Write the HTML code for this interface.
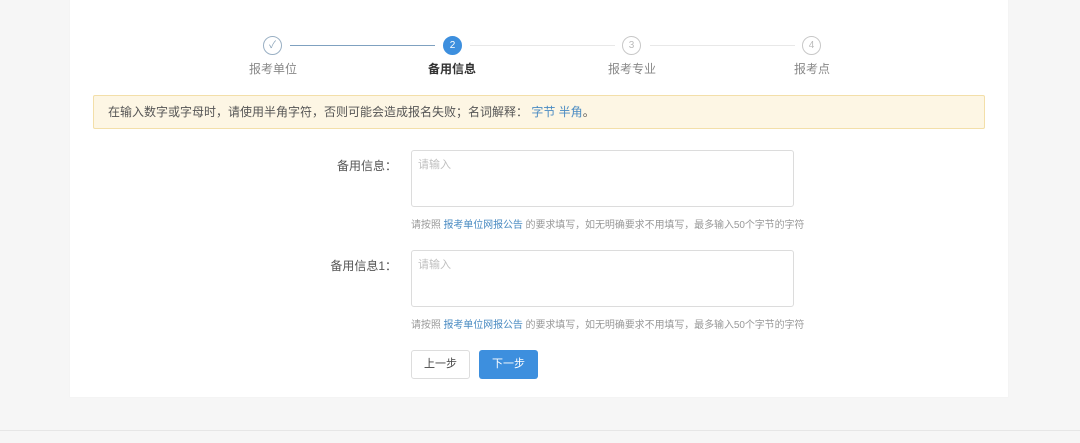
<!DOCTYPE html>
<html><head><meta charset="utf-8"><style>
body{margin:0;width:1080px;height:443px;background:#f6f6f6;font-family:"Liberation Sans","Noto Sans CJK SC",sans-serif;position:relative;overflow:hidden}
.card{position:absolute;left:70px;top:0;width:938px;height:397px;background:#fff;box-shadow:0 0 2px #eee}
.bline{position:absolute;left:0;top:430px;width:1080px;height:1px;background:#e6e6e6}
.a{position:absolute}
.c{position:absolute;width:19px;height:19px;border-radius:50%;border:1px solid #c8c8c8;box-sizing:border-box;text-align:center;font-size:10px;line-height:17px;color:#bbb;background:#fff}
.lbl{position:absolute;font-size:12px;color:#888;transform:translateX(-50%);top:60px;white-space:nowrap}
.ln{position:absolute;top:45px;height:1px}
.ta{position:absolute;left:411px;width:383px;height:57px;border:1px solid #dcdcdc;border-radius:3px;box-sizing:border-box;font-size:11px;color:#c0c0c0;padding:5px 6px}
.fl{position:absolute;font-size:12px;color:#555;right:683px;white-space:nowrap}
.hint{position:absolute;left:411px;font-size:10px;color:#999;white-space:nowrap;letter-spacing:-0.08px}
.hint span{color:#4a8bc2}
.btn{position:absolute;top:350px;height:29px;border-radius:3px;box-sizing:border-box;font-size:11px;text-align:center;line-height:27px}
</style></head><body>
<div class="card"></div>
<div class="bline"></div>
<div class="ln" style="left:290px;width:145px;background:#7fa1c0"></div>
<div class="ln" style="left:470px;width:145px;background:#e8e8e8"></div>
<div class="ln" style="left:650px;width:145px;background:#e8e8e8"></div>
<div class="c" style="left:263px;top:36px;border-color:#9ab0c4;color:#8aa3b8">✓</div>
<div class="c" style="left:443px;top:36px;background:#3d8fde;border-color:#3d8fde;color:#fff">2</div>
<div class="c" style="left:622px;top:36px">3</div>
<div class="c" style="left:802px;top:36px">4</div>
<div class="lbl" style="left:273px">报考单位</div>
<div class="lbl" style="left:452px;color:#333;font-weight:bold">备用信息</div>
<div class="lbl" style="left:632px">报考专业</div>
<div class="lbl" style="left:812px">报考点</div>
<div class="a" style="left:93px;top:95px;width:892px;height:34px;background:#fdf6e4;border:1px solid #f3dfa9;box-sizing:border-box;border-radius:2px;font-size:12px;color:#555;line-height:32px;padding-left:14px">在输入数字或字母时，请使用半角字符，否则可能会造成报名失败；名词解释： <span style="color:#4a8bc2">字节 半角</span>。</div>
<div class="fl" style="top:157px">备用信息：</div>
<div class="ta" style="top:150px">请输入</div>
<div class="hint" style="top:216px">请按照 <span>报考单位网报公告</span> 的要求填写，如无明确要求不用填写，最多输入50个字节的字符</div>
<div class="fl" style="top:257px">备用信息1：</div>
<div class="ta" style="top:250px">请输入</div>
<div class="hint" style="top:316px">请按照 <span>报考单位网报公告</span> 的要求填写，如无明确要求不用填写，最多输入50个字节的字符</div>
<div class="btn" style="left:411px;width:59px;border:1px solid #ddd;color:#444;background:#fff">上一步</div>
<div class="btn" style="left:479px;width:59px;background:#3d8fde;color:#fff;line-height:29px">下一步</div>
</body></html>
